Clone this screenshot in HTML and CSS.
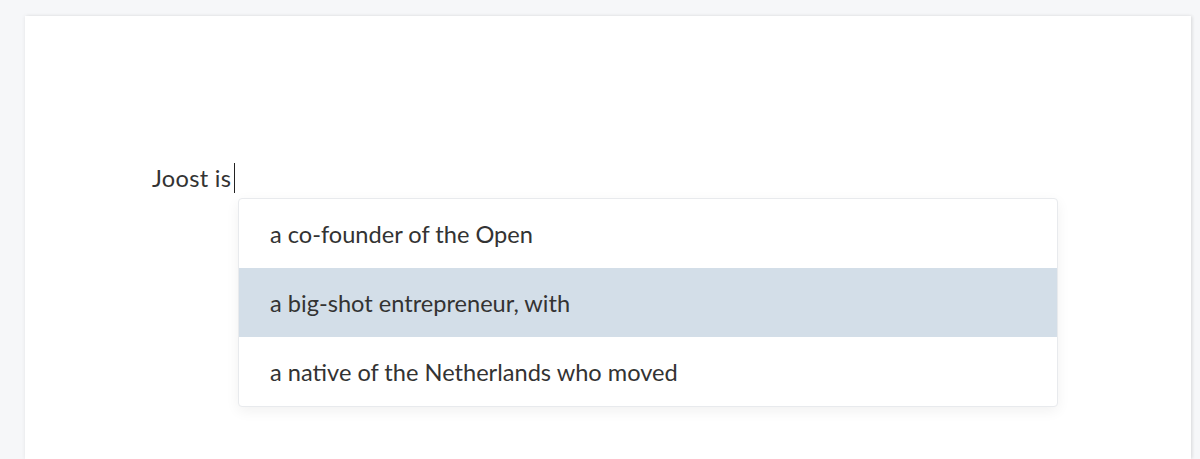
FILE: index.html
```html
<!DOCTYPE html>
<html lang="en">
<head>
<meta charset="utf-8">
<title>Autocomplete</title>
<link rel="stylesheet" href="styles.css">
</head>
<body>
<div class="page">
  <div class="card">
    <div class="editor">
      <span class="line">Joost is<span class="caret"></span></span>
      <ul class="suggestions">
        <li class="item">a co-founder of the Open</li>
        <li class="item active">a big-shot entrepreneur, with</li>
        <li class="item">a native of the Netherlands who moved</li>
      </ul>
    </div>
  </div>
</div>
</body>
</html>
```
FILE: styles.css
```css
html, body {
  margin: 0;
  padding: 0;
  height: 100%;
  overflow: hidden;
}
body {
  background: #f6f7f9;
  font-family: Lato, "Open Sans", sans-serif;
  color: #333;
}
.page {
  padding: 16px 9px 0 25px;
  height: 100%;
  box-sizing: border-box;
}
.card {
  background: #fff;
  height: 100%;
  box-shadow: 0 0 4px rgba(0, 0, 0, 0.08), 2px 0 3px rgba(0, 0, 0, 0.06);
  padding: 147px 0 0 127px;
  box-sizing: border-box;
}
.editor {
  position: relative;
  font-size: 23.6px;
  line-height: 30px;
}
.line {
  display: inline-flex;
  align-items: center;
  letter-spacing: 0.3px;
}
.caret {
  display: inline-block;
  width: 1px;
  height: 30px;
  background: #222;
  margin-left: 3px;
}
.suggestions {
  position: absolute;
  left: 86px;
  top: 35px;
  width: 818px;
  margin: 0;
  padding: 0;
  list-style: none;
  background: #fff;
  border: 1px solid #e8eaed;
  border-radius: 4px;
  box-shadow: 0 4px 14px rgba(0, 0, 0, 0.06);
  overflow: hidden;
}
.item {
  height: 69px;
  display: flex;
  align-items: center;
  padding-left: 31px;
}
.item.active {
  background: #d3dee8;
}
```
